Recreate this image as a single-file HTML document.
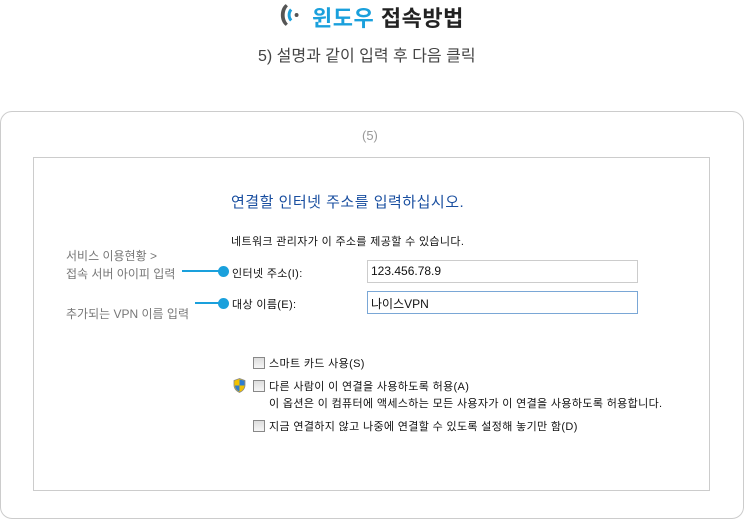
<!DOCTYPE html>
<html><head><meta charset="utf-8"><style>
body{margin:0;width:744px;height:520px;background:#fff;position:relative;font-family:"Liberation Sans","Noto Sans CJK KR",sans-serif;overflow:hidden}
.a{position:absolute;white-space:nowrap}
.f{font-size:11px;color:#111;letter-spacing:0.35px}
.box{position:absolute;border:1px solid #ccc;background:#fff;height:22px;box-sizing:border-box;font-size:12px;padding:3px 3px;color:#111}
.cb{display:inline-block;width:10px;height:10px;border:1px solid #888;background:linear-gradient(#ddd,#f6f6f6);vertical-align:-2px;margin-right:4px}
.line{position:absolute;height:2px;background:#1aa0dc}
.dot{position:absolute;width:11px;height:11px;border-radius:50%;background:#1aa0dc}
.g{font-size:12px;color:#777}
</style></head><body>
<svg class="a" style="left:276px;top:2px" width="26" height="26" viewBox="0 0 24 24"><path d="M9 2 C3 6 3 18 9 22 L11 20 C7 16 7 8 11 4Z" fill="#555"/><path d="M13 6 C10 9 10 15 13 18 L15 16 C13 14 13 10 15 8Z" fill="#1aa0dc"/><circle cx="19" cy="12" r="1.8" fill="#555"/></svg>
<div class="a" style="left:312px;top:1px;font-size:22px;font-weight:bold;color:#1aa0dc;letter-spacing:0.5px">윈도우 <span style="color:#222">접속방법</span></div>
<div class="a" style="left:258px;top:42px;font-size:16px;color:#444">5) 설명과 같이 입력 후 다음 클릭</div>
<div class="a" style="left:0;top:111px;width:742px;height:406px;border:1px solid #ccc;border-radius:12px"></div>
<div class="a" style="left:362px;top:128px;font-size:13px;color:#999">(5)</div>
<div class="a" style="left:33px;top:157px;width:675px;height:332px;border:1px solid #ccc"></div>
<div class="a" style="left:231px;top:191px;font-size:15px;color:#1a4fa0;letter-spacing:0.5px">연결할 인터넷 주소를 입력하십시오.</div>
<div class="a f" style="left:231px;top:233px">네트워크 관리자가 이 주소를 제공할 수 있습니다.</div>
<div class="a g" style="left:66px;top:247px">서비스 이용현황 &gt;</div>
<div class="a g" style="left:66px;top:265px">접속 서버 아이피 입력</div>
<div class="line" style="left:182px;top:270px;width:40px"></div><div class="dot" style="left:218px;top:266px"></div>
<div class="a f" style="left:232px;top:265px">인터넷 주소(I):</div>
<div class="box" style="left:367px;top:260px;width:271px;height:23px">123.456.78.9</div>
<div class="a g" style="left:66px;top:305px">추가되는 VPN 이름 입력</div>
<div class="line" style="left:195px;top:302px;width:27px"></div><div class="dot" style="left:218px;top:298px"></div>
<div class="a f" style="left:232px;top:296px">대상 이름(E):</div>
<div class="box" style="left:367px;top:291px;width:271px;height:23px;border-color:#7aa7d6">나이스VPN</div>
<div class="a f" style="left:253px;top:355px"><span class="cb"></span>스마트 카드 사용(S)</div>
<svg class="a" style="left:233px;top:378px" width="13" height="15" viewBox="0 0 13 15"><path d="M6.5 0.5 L12 2.5 V7 C12 11 9 13.5 6.5 14.5 C4 13.5 1 11 1 7 V2.5Z" fill="#f2c200" stroke="#888" stroke-width="0.8"/><path d="M6.5 1.5 V7.5 H11.5 V2.8Z M6.5 7.5 V13.5 C4 12.5 2 10.5 2 7.5Z" fill="#2f7dd1"/></svg>
<div class="a f" style="left:253px;top:378px"><span class="cb"></span>다른 사람이 이 연결을 사용하도록 허용(A)</div>
<div class="a f" style="left:269px;top:395px">이 옵션은 이 컴퓨터에 액세스하는 모든 사용자가 이 연결을 사용하도록 허용합니다.</div>
<div class="a f" style="left:253px;top:418px"><span class="cb"></span>지금 연결하지 않고 나중에 연결할 수 있도록 설정해 놓기만 함(D)</div>
</body></html>
